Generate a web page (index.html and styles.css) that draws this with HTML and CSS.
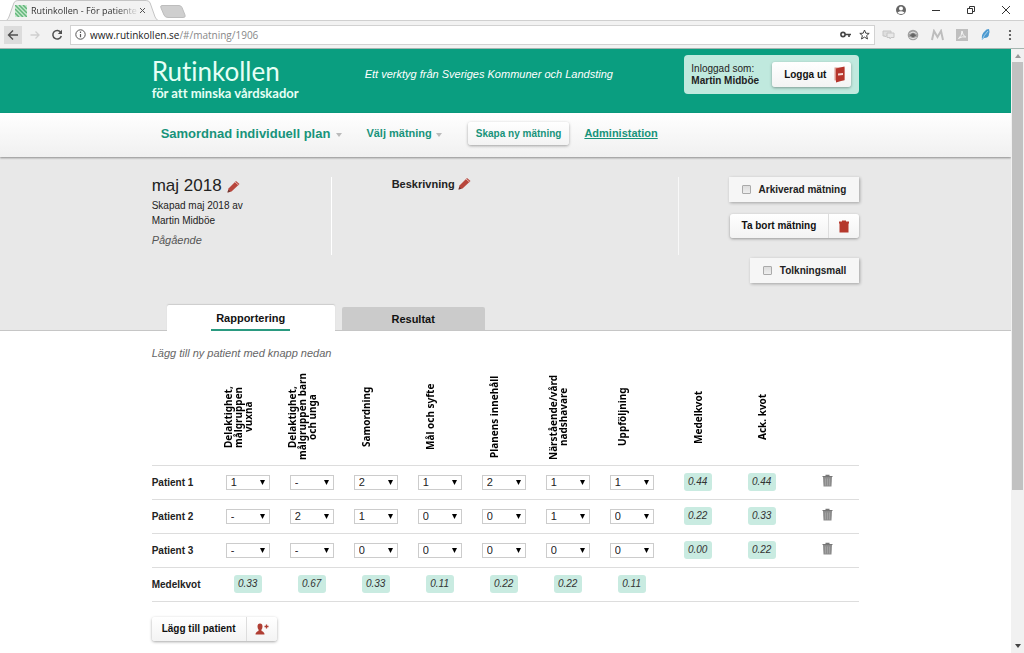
FILE: index.html
```html
<!DOCTYPE html>
<html lang="sv">
<head>
  <meta charset="UTF-8">
  <title>Rutinkollen - För patientens bästa</title>
  <link rel="stylesheet" href="styles.css">
</head>
<body>
  <div class="tab-strip">
    <div class="browser-tab">
      <svg class="tab-shape" viewBox="0 0 158 21" preserveAspectRatio="none"><path d="M0 21.500C3 21 4 19 5 17L10 3Q11 .5 14 .5H144Q147 .5 148 3L153 17Q154 20 158 21.500" fill="#f2f2f2" stroke="#c4c4c4"/></svg>
      <svg class="favicon" width="12" height="12" viewBox="0 0 12 12"><rect width="12" height="12" fill="#c5e8cd"/><path d="M0 0l12 12M4 0l8 8M8 0l4 4M0 4l8 8M0 8l4 4" stroke="#63b77b" stroke-width="1.500"/></svg>
      <span class="tab-title">Rutinkollen - För patiente</span>
      <button class="tab-close" aria-label="Stäng flik"><svg width="7" height="7" viewBox="0 0 7 7"><path d="M1 1l5 5M6 1L1 6" stroke="#555"/></svg></button>
    </div>
    <svg class="new-tab" width="26" height="13" viewBox="0 0 26 13"><path d="M2 .5H19Q21 .5 22 2.500L25 10Q26 12.500 23 12.500H8Q5 12.500 4 10L1 3Q0 .5 2 .5Z" fill="#cfcfcf" stroke="#bdbdbd"/></svg>
    <div class="window-controls">
      <svg width="12" height="12" viewBox="0 0 12 12"><circle cx="6" cy="6" r="5" fill="#666"/><circle cx="6" cy="4.500" r="2" fill="#fff"/><path d="M2.500 8.500Q6 6 9.500 8.500Q8.500 10 6 10T2.500 8.500Z" fill="#fff"/></svg>
      <svg width="12" height="12" viewBox="0 0 12 12"><path d="M2 6.500h8" stroke="#333"/></svg>
      <svg width="12" height="12" viewBox="0 0 12 12"><path d="M2.500 4.500h5v5h-5zM4.500 4V2.500h5v5H8" fill="none" stroke="#333"/></svg>
      <svg width="12" height="12" viewBox="0 0 12 12"><path d="M2 2l8 8M10 2l-8 8" stroke="#333"/></svg>
    </div>
  </div>

  <div class="toolbar">
    <button class="nav-btn active" aria-label="Tillbaka"><svg width="12" height="12" viewBox="0 0 12 12"><path d="M11 6H1.500M6 1.500L1.500 6L6 10.500" fill="none" stroke="#505050" stroke-width="1.400"/></svg></button>
    <button class="nav-btn" aria-label="Framåt"><svg width="12" height="12" viewBox="0 0 12 12"><path d="M1.500 6H10M6.500 2.500L10 6L6.500 9.500" fill="none" stroke="#cfcfcf" stroke-width="1.300"/></svg></button>
    <button class="nav-btn" aria-label="Ladda om"><svg width="12" height="12" viewBox="0 0 12 12"><path d="M9.800 3.400A4.300 4.300 0 1 0 10.300 7" fill="none" stroke="#505050" stroke-width="1.500"/><path d="M11 .8V5H6.800Z" fill="#505050"/></svg></button>
    <div class="address">
      <svg width="11" height="11" viewBox="0 0 11 11"><circle cx="5.500" cy="5.500" r="4.700" fill="none" stroke="#555"/><path d="M5.500 5v3.200M5.500 2.600v1.300" stroke="#555" stroke-width="1.200"/></svg>
      <span class="url"><b>www.rutinkollen.se</b>/#/matning/1906</span>
      <svg width="11" height="7" viewBox="0 0 11 7"><circle cx="3" cy="3.500" r="2.100" fill="none" stroke="#444" stroke-width="1.600"/><path d="M5 3.500h6M9 3.500v2.500" stroke="#444" stroke-width="1.600"/></svg>
      <svg width="11" height="11" viewBox="0 0 11 11"><path d="M5.500 1L6.800 4.200L10.200 4.400L7.600 6.600L8.500 10L5.500 8.100L2.500 10L3.400 6.600L.8 4.400L4.200 4.200Z" fill="none" stroke="#444"/></svg>
    </div>
    <div class="extensions">
      <svg width="13" height="12" viewBox="0 0 13 12"><path d="M1 2h8v5H4L3 8V7H1z" fill="#dedede" stroke="#c6c6c6"/><path d="M5 4h7v4.500H9L8 10V8.500H5z" fill="#e8e8e8" stroke="#c6c6c6"/></svg>
      <svg width="12" height="12" viewBox="0 0 12 12"><circle cx="6" cy="6" r="5.300" fill="#a0a0a0"/><path d="M2.500 4.500Q6 1.500 9.500 4.500M2.500 8.500Q6 11 9.500 8.500" fill="none" stroke="#e8e8e8"/><circle cx="6" cy="6.300" r="2" fill="#666"/><path d="M3 6.300h6" stroke="#666"/></svg>
      <svg width="13" height="12" viewBox="0 0 13 12"><path d="M1 11L3 2L6.500 8L10 2L12 11" fill="none" stroke="#bdbdbd" stroke-width="2"/></svg>
      <svg width="12" height="12" viewBox="0 0 12 12"><rect width="12" height="12" fill="#bfbfbf"/><path d="M2.500 9.500Q6 7 6 2Q6.500 7 9.800 8Q6 7 2.500 9.500Z" fill="none" stroke="#f5f5f5"/></svg>
      <svg width="12" height="13" viewBox="0 0 12 13"><path d="M2 12Q1 6 5 3Q6 1 9 1Q10 4 9 6Q9 10 4 10Z" fill="#4d9ad0"/><path d="M2 12Q4 7 8 3" fill="none" stroke="#a8d2ee"/></svg>
      <svg width="12" height="12" viewBox="0 0 12 12"><circle cx="6" cy="2" r="1.100" fill="#444"/><circle cx="6" cy="6" r="1.100" fill="#444"/><circle cx="6" cy="10" r="1.100" fill="#444"/></svg>
    </div>
  </div>

  <div class="viewport">
    <div class="page">
      <header class="site-header">
        <div class="container header-row">
          <a class="logo" href="#/">
            <span class="logo-name">Rutinkollen</span>
            <span class="logo-tagline">för att minska vårdskador</span>
          </a>
          <em class="slogan">Ett verktyg från Sveriges Kommuner och Landsting</em>
          <div class="login-box">
            <div>Inloggad som:<br><strong>Martin Midböe</strong></div>
            <button class="btn logout">Logga ut
              <svg width="11" height="17" viewBox="0 0 11 17"><path d="M.5 1.500H10.500V14.500H.5Z" fill="#d9948b"/><path d="M2 2.500L10.500 .5V14L2 16.500Z" fill="#b5342b"/><path d="M4 7.500l5-.5v2l-5 .5z" fill="#f5d9d5"/></svg>
            </button>
          </div>
        </div>
      </header>

      <nav class="main-nav">
        <div class="container nav-row">
          <button class="nav-drop large">Samordnad individuell plan <i class="caret"></i></button>
          <button class="nav-drop">Välj mätning <i class="caret"></i></button>
          <button class="btn create">Skapa ny mätning</button>
          <a class="nav-link" href="#/admin">Administation</a>
        </div>
      </nav>

      <section class="summary">
        <div class="container summary-row">
          <div class="info">
            <h1>maj 2018
              <svg class="pencil" width="13" height="13" viewBox="0 0 13 13"><path d="M.5 12.500L1.500 8.500L9 1L12.500 4L4.500 11.500Z" fill="#b8463c"/><path d="M8 2L11.500 5" stroke="#e7b5ae"/><path d="M.5 12.500L1.300 9.800L3.500 11.800Z" fill="#6b3a34"/></svg>
            </h1>
            <p>Skapad maj 2018 av<br>Martin Midböe</p>
            <em>Pågående</em>
          </div>
          <div class="description">
            <h2>Beskrivning
              <svg class="pencil" width="13" height="13" viewBox="0 0 13 13"><path d="M.5 12.500L1.500 8.500L9 1L12.500 4L4.500 11.500Z" fill="#b8463c"/><path d="M8 2L11.500 5" stroke="#e7b5ae"/><path d="M.5 12.500L1.300 9.800L3.500 11.800Z" fill="#6b3a34"/></svg>
            </h2>
          </div>
          <div class="actions">
            <label class="check-box"><input type="checkbox">Arkiverad mätning</label>
            <button class="btn split">
              <span>Ta bort mätning</span>
              <span class="btn-icon"><svg width="10" height="13" viewBox="0 0 10 13"><path d="M0 3.500V1.500H3V.5H7V1.500H10V3.500H9.500V12.500H.5V3.500Z" fill="#b5382c"/></svg></span>
            </button>
            <label class="check-box spaced"><input type="checkbox">Tolkningsmall</label>
          </div>
        </div>
        <div class="container tabs">
          <button class="tab selected"><span>Rapportering</span></button>
          <button class="tab">Resultat</button>
        </div>
      </section>

      <main class="container report">
        <p class="hint">Lägg till ny patient med knapp nedan</p>
        <table>
          <colgroup>
            <col class="col-name">
            <col span="9" class="col-value">
            <col>
          </colgroup>
          <thead>
            <tr>
              <td></td>
              <th><div>Delaktighet,<br>målgruppen<br>vuxna</div></th>
              <th><div>Delaktighet,<br>målgruppen barn<br>och unga</div></th>
              <th><div>Samordning</div></th>
              <th><div>Mål och syfte</div></th>
              <th><div>Planens innehåll</div></th>
              <th><div>Närstående/vård<br>nadshavare</div></th>
              <th><div>Uppföljning</div></th>
              <th class="ratio"><div>Medelkvot</div></th>
              <th class="ratio"><div>Ack. kvot</div></th>
              <td></td>
            </tr>
          </thead>
          <tbody id="patients"></tbody>
          <tfoot>
            <tr id="averages"><th>Medelkvot</th></tr>
          </tfoot>
        </table>
        <button class="btn split add">
          <span>Lägg till patient</span>
          <span class="btn-icon"><svg width="14" height="12" viewBox="0 0 14 12"><path d="M5 .5Q7.500 .5 7.500 3.500Q7.500 5.500 6.500 6.500V8Q9.500 9 9.500 11.500H.5Q.5 9 3.500 8V6.500Q2.500 5.500 2.500 3.500Q2.500 .5 5 .5Z" fill="#b03e33"/><path d="M11.500 1.500v4M9.500 3.500h4" stroke="#b03e33" stroke-width="1.300"/></svg></span>
        </button>
      </main>
    </div>

    <div class="scrollbar">
      <i class="arrow-up"></i>
      <div class="track"><div class="thumb"></div></div>
      <i class="arrow-down"></i>
    </div>
  </div>

  <script>
    const patients = [
      { name: 'Patient 1', answers: ['1', '-', '2', '1', '2', '1', '1'], mean: '0.44', acc: '0.44' },
      { name: 'Patient 2', answers: ['-', '2', '1', '0', '0', '1', '0'], mean: '0.22', acc: '0.33' },
      { name: 'Patient 3', answers: ['-', '-', '0', '0', '0', '0', '0'], mean: '0.00', acc: '0.22' }
    ];
    const averages = ['0.33', '0.67', '0.33', '0.11', '0.22', '0.22', '0.11'];

    const trash = `<svg width="11" height="13" viewBox="0 0 11 13"><path d="M.5 3V2H3.500V.8H7.500V2H10.500V3Z" fill="#777"/><path d="M1 3H10L9.500 12.500H1.500Z" fill="#8c8c8c"/><path d="M3.500 4.500v7M5.500 4.500v7M7.500 4.500v7" stroke="#a8a8a8" stroke-width=".8"/></svg>`;

    function answerCell(value, label) {
      const options = ['-', '0', '1', '2']
        .map(o => `<option${o === value ? ' selected' : ''}>${o}</option>`)
        .join('');
      return `<td><select aria-label="${label}">${options}</select></td>`;
    }

    document.getElementById('patients').innerHTML = patients.map(p => `
      <tr>
        <th>${p.name}</th>
        ${p.answers.map((a, i) => answerCell(a, `${p.name}, fråga ${i + 1}`)).join('')}
        <td class="ratio"><span class="badge">${p.mean}</span></td>
        <td class="ratio"><span class="badge">${p.acc}</span></td>
        <td class="remove"><button aria-label="Ta bort ${p.name}">${trash}</button></td>
      </tr>`).join('');

    document.getElementById('averages').innerHTML +=
      averages.map(a => `<td class="average"><span class="badge">${a}</span></td>`).join('') +
      '<td colspan="3"></td>';
  </script>
</body>
</html>
```
FILE: styles.css
```css
* {
  box-sizing: border-box;
}
body {
  margin: 0;
  height: 100vh;
  display: flex;
  flex-direction: column;
  overflow: hidden;
  font-family: "Liberation Sans", Arial, sans-serif;
  font-size: 11px;
  color: #222;
  background: #fff;
}
button {
  font: inherit;
  color: inherit;
  border: none;
  background: none;
  padding: 0;
  cursor: pointer;
}
svg {
  display: block;
  flex: none;
}

/* browser window */
.tab-strip {
  display: flex;
  height: 21px;
  padding: 0 12px 0 4px;
  border-bottom: 1px solid #d0d0d0;
  font-family: "Open Sans", "Noto Sans", sans-serif;
  font-size: 9px;
}
.browser-tab {
  position: relative;
  display: flex;
  align-items: center;
  width: 156px;
  height: 21px;
  padding: 0 14px 0 11px;
}
.tab-shape {
  position: absolute;
  inset: 0;
  width: 100%;
  height: 100%;
  z-index: -1;
}
.tab-title {
  flex: 1;
  margin: 0 0 0 4px;
  white-space: nowrap;
  color: #333;
  -webkit-mask-image: linear-gradient(90deg, #000 80%, transparent);
  mask-image: linear-gradient(90deg, #000 80%, transparent);
}
.new-tab {
  margin-top: 5px;
}
.window-controls {
  display: flex;
  gap: 23px;
  margin-left: auto;
  padding-top: 4px;
}
.toolbar {
  display: flex;
  align-items: center;
  height: 28px;
  padding: 0 8px 0 4px;
  gap: 4px;
  background: #f2f2f2;
  border-bottom: 1px solid #a5b5b0;
}
.nav-btn {
  display: flex;
  align-items: center;
  justify-content: center;
  width: 18px;
  height: 18px;
}
.nav-btn.active {
  background: #dcdcdc;
}
.address {
  flex: 1;
  display: flex;
  align-items: center;
  gap: 8px;
  height: 20px;
  padding: 0 4px;
  background: #fff;
  border: 1px solid #d2d2d2;
  font-family: "Open Sans", "Noto Sans", sans-serif;
  font-size: 10px;
  color: #888;
}
.url {
  flex: 1;
  margin-left: -4px;
}
.url b {
  font-weight: 400;
  color: #222;
}
.extensions {
  display: flex;
  align-items: center;
  gap: 12px;
  padding-left: 3px;
}

/* page */
.viewport {
  flex: 1;
  display: flex;
  min-height: 0;
}
.page {
  flex: 1;
  overflow: hidden;
}
.container {
  width: 70%;
  min-width: 707px;
  max-width: 960px;
  margin: 0 auto;
}
.btn {
  font-size: 10px;
  font-weight: 700;
  color: #111;
  background: linear-gradient(#fff, #f3f3f3);
  border-radius: 3px;
  box-shadow: 0 1px 3px rgba(0,0,0,0.35);
}
.site-header {
  background: #0a9e80;
}
.header-row {
  display: flex;
  align-items: flex-start;
  height: 64px;
  padding-top: 6px;
}
.logo {
  width: 213px;
  padding-top: 1px;
  color: #e6fff5;
  text-decoration: none;
  font-family: Lato, "Noto Sans", sans-serif;
  font-variant-ligatures: none;
}
.logo span {
  display: block;
}
.logo-name {
  font-size: 26px;
  line-height: 30px;
}
.logo-tagline {
  font-size: 13px;
  line-height: 14px;
  font-weight: 700;
}
.slogan {
  padding-top: 13px;
  color: #fff;
}
.login-box {
  display: flex;
  align-items: center;
  justify-content: space-between;
  width: 175px;
  height: 39px;
  margin-left: auto;
  padding: 0 8px 0 7px;
  border-radius: 4px;
  background: #c0e9de;
  font-size: 10px;
  line-height: 12px;
}
.logout {
  display: flex;
  align-items: center;
  gap: 8px;
  height: 25px;
  padding: 0 6px 0 12px;
}
.main-nav {
  position: relative;
  background: linear-gradient(#fff, #f0f0f0);
  box-shadow: 0 1px 2px rgba(0,0,0,0.4);
}
.nav-row {
  display: flex;
  align-items: center;
  height: 44px;
  padding: 0 0 4px 9px;
  color: #17937a;
  font-weight: 700;
}
.nav-drop {
  display: flex;
  align-items: center;
  gap: 4px;
  margin-right: 26px;
  font-weight: 700;
}
.nav-drop.large {
  gap: 6px;
  margin-right: 24px;
  font-size: 13px;
}
.caret {
  margin-top: 4px;
  border: 3px solid transparent;
  border-top: 4px solid #bbb;
  border-bottom: none;
}
.create {
  height: 23px;
  margin-right: 15px;
  padding: 0 8px;
  color: #17937a;
}
.nav-link {
  color: inherit;
}
.summary {
  padding-top: 20px;
  background: #e8e8e8;
  border-bottom: 1px solid #c6c6c6;
}
.summary-row {
  display: flex;
  align-items: flex-start;
}
.info {
  width: 180px;
  height: 78px;
  border-right: 1px solid #fff;
}
.info h1 {
  display: flex;
  align-items: center;
  gap: 5px;
  margin: 0 0 3px;
  font-size: 17px;
  line-height: 18px;
  font-weight: 400;
}
.info p {
  margin: 0 0 4px;
  font-size: 10px;
  line-height: 15px;
}
.info em {
  color: #555;
  line-height: 16px;
}
.description {
  flex: 1;
  height: 78px;
  padding-left: 60px;
  border-right: 1px solid #f8f8f8;
}
.description h2 {
  display: flex;
  align-items: flex-start;
  gap: 3px;
  margin: 0;
  font-size: 11px;
  line-height: 15px;
}
.actions {
  display: flex;
  flex-direction: column;
  align-items: flex-end;
  gap: 12px;
  width: 180px;
}
.check-box {
  display: flex;
  align-items: center;
  height: 25px;
  padding: 0 13px;
  background: #f6f6f6;
  box-shadow: 1px 1px 3px rgba(0,0,0,0.3);
  font-size: 10px;
  font-weight: 700;
}
.check-box.spaced {
  margin-top: 8px;
}
.check-box input {
  appearance: none;
  width: 9px;
  height: 9px;
  margin: 0 8px 0 0;
  border: 1px solid #aaa;
  border-radius: 1px;
  background: linear-gradient(#ddd, #eee);
}
.split {
  display: flex;
  align-items: stretch;
  height: 24px;
  line-height: 24px;
}
.split span:first-child {
  padding: 0 12px;
}
.btn-icon {
  display: flex;
  align-items: center;
  justify-content: center;
  width: 31px;
  border-left: 1px solid #ddd;
}
.tabs {
  display: flex;
  align-items: flex-end;
  gap: 7px;
  margin-top: 22px;
  padding-left: 15px;
}
.tab {
  width: 143px;
  height: 23px;
  font-weight: 700;
  color: #111;
  background: #cbcbcb;
  border-radius: 2px 2px 0 0;
}
.tab.selected {
  width: 168px;
  height: 26px;
  margin-bottom: -1px;
  background: #fff;
  box-shadow: 0 -1px 1px #ccc;
}
.tab.selected span {
  display: inline-block;
  padding: 0 5px;
  height: 26px;
  line-height: 26px;
  border-bottom: 2px solid #2a9a80;
}
.hint {
  margin: 15px 0 5px;
  line-height: 14px;
  font-style: italic;
  color: #666;
}
table {
  width: 100%;
  table-layout: fixed;
  border-collapse: collapse;
}
.col-name {
  width: 74px;
}
.col-value {
  width: 64px;
}
tr {
  height: 34px;
  border-bottom: 1px solid #ddd;
}
th, td {
  padding: 0;
  text-align: left;
  vertical-align: middle;
}
tbody th, tfoot th {
  font-size: 10px;
}
thead tr {
  height: 100px;
}
thead th {
  padding-top: 4px;
}
thead th div {
  display: flex;
  flex-direction: column;
  align-items: center;
  justify-content: center;
  writing-mode: vertical-rl;
  transform: rotate(180deg);
  width: 24px;
  height: 90px;
  font-family: "Noto Sans", sans-serif;
  font-size: 10px;
  line-height: 10px;
  text-align: center;
  white-space: nowrap;
  color: #000;
}
thead .ratio div {
  width: 28px;
}
.ratio {
  padding-left: 10px;
}
.average {
  padding-left: 8px;
}
.remove {
  padding: 0 0 4px 20px;
}
.remove button {
  display: block;
}
select {
  appearance: none;
  display: block;
  width: 44px;
  height: 15px;
  padding: 0 4px;
  border: 1px solid #ccc;
  border-radius: 0;
  font: 11px "Liberation Sans", Arial, sans-serif;
  line-height: 13px;
  color: #222;
  background: #fff url("data:image/svg+xml,%3Csvg xmlns='http://www.w3.org/2000/svg' width='5' height='5'%3E%3Cpath d='M0 0h5L2.500 5z'/%3E%3C/svg%3E") no-repeat right 4px center;
}
.badge {
  display: block;
  width: 28px;
  height: 18px;
  border-radius: 3px;
  background: #c9ebe1;
  font-size: 10px;
  line-height: 18px;
  font-style: italic;
  text-align: center;
  color: #333;
}
.add {
  margin-top: 15px;
}
.split.add span:first-child {
  padding: 0 10px;
}

/* scrollbar */
.scrollbar {
  display: flex;
  flex-direction: column;
  align-items: center;
  width: 13px;
  padding: 5px 0;
  background: #f1f1f1;
}
.track {
  flex: 1;
  width: 11px;
  margin: 4px 0;
}
.thumb {
  height: 74%;
  background: #c1c1c1;
}
.arrow-up, .arrow-down {
  border: 3px solid transparent;
}
.arrow-up {
  border-top: none;
  border-bottom: 4px solid #999;
}
.arrow-down {
  border-bottom: none;
  border-top: 4px solid #444;
}
```
